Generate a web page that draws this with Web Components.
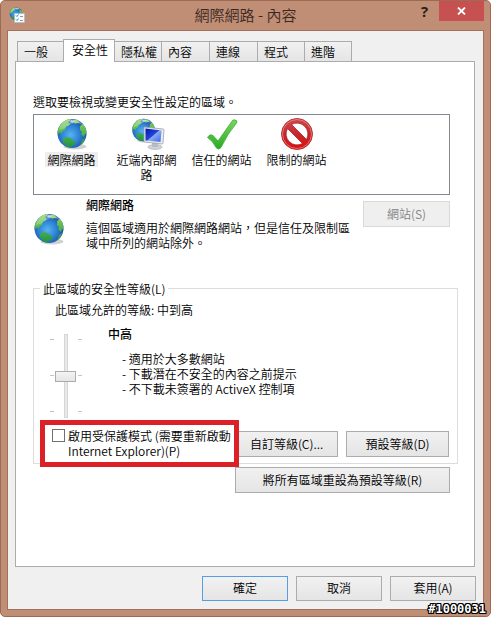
<!DOCTYPE html>
<html lang="zh-Hant">
<head>
<meta charset="utf-8">
<title>網際網路 - 內容</title>
<style>
html, body { margin: 0; background: #fff; }
body { font: 350 12px/15px "Noto Sans CJK TC", "Noto Sans", sans-serif; color: #000; }
</style>
</head>
<body>
<security-dialog></security-dialog>

<template id="t-globe">
<style>:host{display:block;width:32px;height:32px}svg{display:block;width:100%;height:100%}</style>
<svg viewBox="0 0 32 32" aria-hidden="true">
<defs>
<radialGradient id="sea" cx=".45" cy=".55" r=".6"><stop offset="0" stop-color="#58b4f0"/><stop offset=".5" stop-color="#2f83d6"/><stop offset="1" stop-color="#154798"/></radialGradient>
<linearGradient id="land" x2="0" y2="1"><stop offset="0" stop-color="#8bd65c"/><stop offset="1" stop-color="#219544"/></linearGradient>
<clipPath id="ball"><circle cx="16" cy="15.500" r="14.500"/></clipPath>
</defs>
<ellipse cx="19" cy="28.500" rx="11.500" ry="3" fill="#999" opacity=".45"/>
<circle cx="16" cy="15.500" r="14.500" fill="url(#sea)"/>
<g clip-path="url(#ball)">
<path fill="url(#land)" d="M7 3C10 1 13 0 15 1L14 3 12 4 14 6 12 8 10 8 9 12 7 13 5 16 4 14 1 17 1 10ZM17 2L21 2 24 5 21 5 19 6 18 4ZM24 8L27 6 31 10 32 17 29 16 28 19 25 16 26 14 24 12ZM7 21C10 18 14 19 17 22L20 24 18 27 15 29 11 29 9 26 7 25ZM26 22L29 20 27 25 24 28Z"/>
<path fill="#fff" opacity=".25" d="M11 1C19-1 26 3 28 8 22 4 17 4 12 8 10 10 7 11 3 12 4 7 7 3 11 1Z"/>
<path fill="#fff" opacity=".65" d="M15 2L19 3 17 5 14 4Z"/>
</g>
</svg>
</template>

<template id="t-button">
<style>
:host{display:block}
button{display:block;box-sizing:border-box;width:100%;height:var(--h,26px);margin:0;padding:0 4px 2px;border:1px solid #acacac;background:linear-gradient(#f1f1f1,#e5e5e5);font:inherit;color:inherit;white-space:nowrap}
:host([primary]) button{border-color:#569de5}
button:disabled{color:#838383;border-color:#d9d9d9;background:#efefef}
</style>
<button type="button"><slot></slot></button>
</template>

<template id="t-tab">
<style>
:host{display:block;margin-right:-1px}
button{display:block;box-sizing:border-box;width:var(--w,49px);height:20px;margin:0;padding:0 0 0 6px;border:1px solid #acacac;border-bottom:0;background:linear-gradient(#f1f1f1,#e5e5e5);font:inherit;color:inherit;text-align:left;white-space:nowrap}
:host([selected]) button{height:23px;margin-bottom:-1px;padding:0 0 3px 8px;background:#fff;position:relative}
</style>
<button type="button" role="tab"><slot></slot></button>
</template>

<template id="t-zone">
<style>
:host{display:block;width:75px}
button{display:flex;flex-direction:column;align-items:center;gap:2px;width:100%;padding:0 6px;margin:0;border:0;background:none;font:inherit;color:inherit}
.pic{height:32px}
.label{padding:0 1px}
:host([selected]) .label{background:#eeeeee;padding:0 2px}
</style>
<button type="button" role="option"><span class="pic"><slot name="icon"></slot></span><span class="label"><slot></slot></span></button>
</template>

<template id="t-slider">
<style>
:host{display:grid;grid-template-columns:4px 1fr 4px;width:32px;height:84px}
.ticks{display:flex;flex-direction:column;justify-content:space-between;padding:5px 0 6px}
i{display:block;height:1px;background:#c4c4c4}
input{appearance:none;writing-mode:vertical-lr;direction:rtl;justify-self:center;width:22px;height:84px;margin:0;background:none}
input::-webkit-slider-runnable-track{width:4px;height:84px;box-sizing:border-box;background:#e7eaea;border:1px solid #d6d6d6}
input::-webkit-slider-thumb{appearance:none;box-sizing:border-box;width:21px;height:11px;margin-left:-10px;border:1px solid #acacac;background:linear-gradient(#f4f4f4,#e5e5e5)}
</style>
<span class="ticks"><i></i><i></i><i></i></span>
<input type="range" min="0" max="2" value="1" aria-label="安全性等級">
<span class="ticks"><i></i><i></i><i></i></span>
</template>

<template id="t-protect">
<style>
:host{display:block;position:relative}
label{display:grid;grid-template-columns:13px 1fr;column-gap:3px;align-items:start}
input{appearance:none;box-sizing:border-box;width:13px;height:13px;margin:1px 0 0;border:1px solid #707070;background:#fff}
.mark{position:absolute;inset:-8px -4px -9px -12px;border:5px solid #dc2027;pointer-events:none;z-index:2}
</style>
<label><input type="checkbox"><span><slot></slot></span></label>
<span class="mark"></span>
</template>

<template id="t-dialog">
<style>
:host{display:block}
.window{box-sizing:border-box;min-height:100vh;display:flex;flex-direction:column;border:1px solid #9d6b55;border-radius:5px;padding:0 6px 6px;background:#c08d75;position:relative}
header{display:grid;grid-template-columns:1fr auto 1fr;height:29px;align-items:start}
header svg{display:block}
.app{padding:6px 0 0 2px}
h1{margin:0;font:350 15px/28px "Noto Sans CJK TC",sans-serif;color:#3a2923}
.tools{display:flex;justify-content:flex-end;gap:8px}
.tools button{border:0;padding:0;margin:0;height:20px;background:none;display:flex;align-items:center;justify-content:center}
.tools .help{width:13px;color:#2b1d18;font:bold 15px/20px "Open Sans",sans-serif}
.tools .close{width:45px;background:#c75050}
main{flex:1;display:flex;flex-direction:column;background:#f0f0f0;border:1px solid #a1735f;padding:8px 7px 8px}
nav{display:flex;align-items:flex-end;padding-left:2px;height:22px}
.panel{flex:1;border:1px solid #acacac;background:#fff;padding:32px 16px 16px 17px;margin-right:1px}
.inset{margin-right:8px}
p,h2,ul{margin:0;padding:0;font:inherit}
.zones{display:flex;box-sizing:border-box;height:81px;margin-top:5px;padding:3px 0;border:1px solid #828790}
.about{display:grid;grid-template-columns:43px 1fr 87px;column-gap:10px;padding-top:2px;align-items:start}
.about ie-globe{margin-top:16px}
.about win-button{margin-top:4px}
h2{font-weight:500}
.about p{margin-top:8px}
fieldset{min-width:0;margin:31px 0 0;padding:6px 8px 5px 18px;border:1px solid #dcdcdc}
legend{padding:0 3px;margin-left:-12px}
.allow{padding-left:3px}
.level{display:grid;grid-template-columns:32px 1fr;column-gap:24px;align-items:start;padding-top:9px}
.level range-slider{margin-top:8px;margin-left:-2px}
ul{list-style:none;margin:10px 0 0 14px}
.actions{display:grid;grid-template-columns:183px 103px 1fr;align-items:start;padding-top:10px}
.actions win-button{margin-top:3px}
.actions win-button:last-child{margin-left:8px}
.reset{display:grid;grid-template-columns:202px 1fr;padding-top:3px;margin-right:8px}
.reset win-button{grid-column:2}
footer{display:flex;justify-content:flex-end;gap:8px;padding-top:9px}
footer win-button{width:86px;--h:25px}
.stamp{position:absolute;right:4px;bottom:0;font:bold 12px/14px "DejaVu Sans Mono",monospace;color:#fff;text-shadow:-1px -1px #000,1px -1px #000,-1px 1px #000,1px 1px #000,0 1px #000,0 -1px #000,1px 0 #000,-1px 0 #000}
.net{display:block;width:32px;height:32px;position:relative}
.net ie-globe{width:25px;height:25px}
.net svg{position:absolute;left:12px;top:8px}
.app .badge{position:relative;display:block;width:16px;height:16px}
.app ie-globe{width:14px;height:14px}
.app .badge svg{position:absolute;left:5px;top:6px}
</style>
<div class="window">
<header>
<div class="app"><span class="badge"><ie-globe></ie-globe><svg width="11" height="10" viewBox="0 0 11 10"><path fill="#f8fbff" stroke="#aab8c5" stroke-width=".6" d="M.5.500H10.500V9.500H.5Z"/><path fill="none" stroke="#3489c8" d="M2 2.500L3 3.500 4.500 1.500M2 6.500L3 7.500 4.500 5.500"/><path stroke="#8a98a6" d="M6 3.500H9M6 7.500H9"/></svg></span></div>
<h1>網際網路 - 內容</h1>
<div class="tools"><button class="help" type="button">?</button><button class="close" type="button" aria-label="關閉"><svg width="9" height="8" viewBox="0 0 9 8"><path d="M1 .5L8 7.500M8 .5L1 7.500" stroke="#fff" stroke-width="1.800"/></svg></button></div>
</header>
<main>
<nav role="tablist"><win-tab style="--w:47px">一般</win-tab><win-tab selected style="--w:52px">安全性</win-tab><win-tab style="--w:48px">隱私權</win-tab><win-tab>內容</win-tab><win-tab>連線</win-tab><win-tab style="--w:48px">程式</win-tab><win-tab style="--w:48px">進階</win-tab></nav>
<section class="panel">
<p>選取要檢視或變更安全性設定的區域。</p>
<div class="zones inset" role="listbox" aria-label="區域">
<zone-item selected><ie-globe slot="icon"></ie-globe>網際網路</zone-item>
<zone-item><span class="net" slot="icon"><ie-globe></ie-globe><svg width="22" height="24" viewBox="0 0 22 24"><defs><linearGradient id="scr" x2="1" y2="1"><stop offset="0" stop-color="#0414a8"/><stop offset=".48" stop-color="#2345dc"/><stop offset=".52" stop-color="#89aaf5"/><stop offset="1" stop-color="#3b68e0"/></linearGradient></defs><ellipse cx="12" cy="21" rx="7" ry="2.500" fill="#cfd2d6" stroke="#a9acb0" stroke-width=".6"/><path fill="#b9bdc3" d="M9 16L15 17V21H9Z"/><path fill="#e8ebef" stroke="#9ba0aa" stroke-width=".8" d="M1 1L20 3Q21 3 21 4L20 17Q20 18 19 18L2 16Q1 16 1 15Z"/><path fill="url(#scr)" d="M2.500 2.500L18.500 4.500 17.500 16 2.500 14.500Z"/></svg></span>近端內部網路</zone-item>
<zone-item><svg slot="icon" width="32" height="32" viewBox="0 0 32 32"><defs><linearGradient id="chk" x2="0" y2="1"><stop offset="0" stop-color="#77d65b"/><stop offset="1" stop-color="#2baa27"/></linearGradient></defs><path fill="url(#chk)" stroke="#3daa35" stroke-width=".8" stroke-linejoin="round" d="M1.500 19.500Q4 15 7.500 18L12 23 26.500 2.500Q28 .8 31 3L30.500 5Q22 15 15 29.500Q12.500 32.500 10 29.500Q7 23 1.500 19.500Z"/></svg>信任的網站</zone-item>
<zone-item><svg slot="icon" width="32" height="32" viewBox="0 0 32 32"><defs><linearGradient id="ban" x2="0" y2="1"><stop offset="0" stop-color="#d04b4d"/><stop offset=".5" stop-color="#c4292c"/><stop offset="1" stop-color="#e00d0d"/></linearGradient></defs><path fill="url(#ban)" stroke="#a91e22" stroke-width=".8" fill-rule="evenodd" d="M16 .5A15.500 15.500 0 1 1 16 31.500A15.500 15.500 0 1 1 16 .5ZM10.500 6.500L25.500 21.500A11 11 0 0 0 10.500 6.500ZM6.500 10.500A11 11 0 0 0 21.500 25.500Z"/><circle cx="16" cy="16" r="14.500" fill="none" stroke="#eda0a0" stroke-width=".8" opacity=".8"/></svg>限制的網站</zone-item>
</div>
<div class="about inset"><ie-globe></ie-globe><div><h2>網際網路</h2><p>這個區域適用於網際網路網站，但是信任及限制區域中所列的網站除外。</p></div><win-button disabled>網站(S)</win-button></div>
<fieldset>
<legend>此區域的安全性等級(L)</legend>
<p class="allow">此區域允許的等級: 中到高</p>
<div class="level"><range-slider></range-slider><div><h2>中高</h2><ul><li>- 適用於大多數網站</li><li>- 下載潛在不安全的內容之前提示</li><li>- 不下載未簽署的 ActiveX 控制項</li></ul></div></div>
<div class="actions"><protect-check>啟用受保護模式 (需要重新啟動 Internet Explorer)(P)</protect-check><win-button>自訂等級(C)...</win-button><win-button>預設等級(D)</win-button></div>
</fieldset>
<div class="reset"><win-button>將所有區域重設為預設等級(R)</win-button></div>
</section>
<footer><win-button primary>確定</win-button><win-button>取消</win-button><win-button>套用(A)</win-button></footer>
</main>
<span class="stamp">#1000031</span>
</div>
</template>

<script>
class TemplateElement extends HTMLElement {
  constructor() {
    super();
    const template = document.getElementById(this.constructor.template);
    this.attachShadow({ mode: "open" }).append(template.content.cloneNode(true));
  }
}
customElements.define("ie-globe", class extends TemplateElement { static template = "t-globe"; });
customElements.define("win-button", class extends TemplateElement {
  static template = "t-button";
  connectedCallback() { this.shadowRoot.querySelector("button").disabled = this.hasAttribute("disabled"); }
});
customElements.define("win-tab", class extends TemplateElement {
  static template = "t-tab";
  connectedCallback() { this.shadowRoot.querySelector("button").setAttribute("aria-selected", this.hasAttribute("selected")); }
});
customElements.define("zone-item", class extends TemplateElement {
  static template = "t-zone";
  connectedCallback() { this.shadowRoot.querySelector("button").setAttribute("aria-selected", this.hasAttribute("selected")); }
});
customElements.define("range-slider", class extends TemplateElement { static template = "t-slider"; });
customElements.define("protect-check", class extends TemplateElement { static template = "t-protect"; });
customElements.define("security-dialog", class extends TemplateElement { static template = "t-dialog"; });
</script>
</body>
</html>
